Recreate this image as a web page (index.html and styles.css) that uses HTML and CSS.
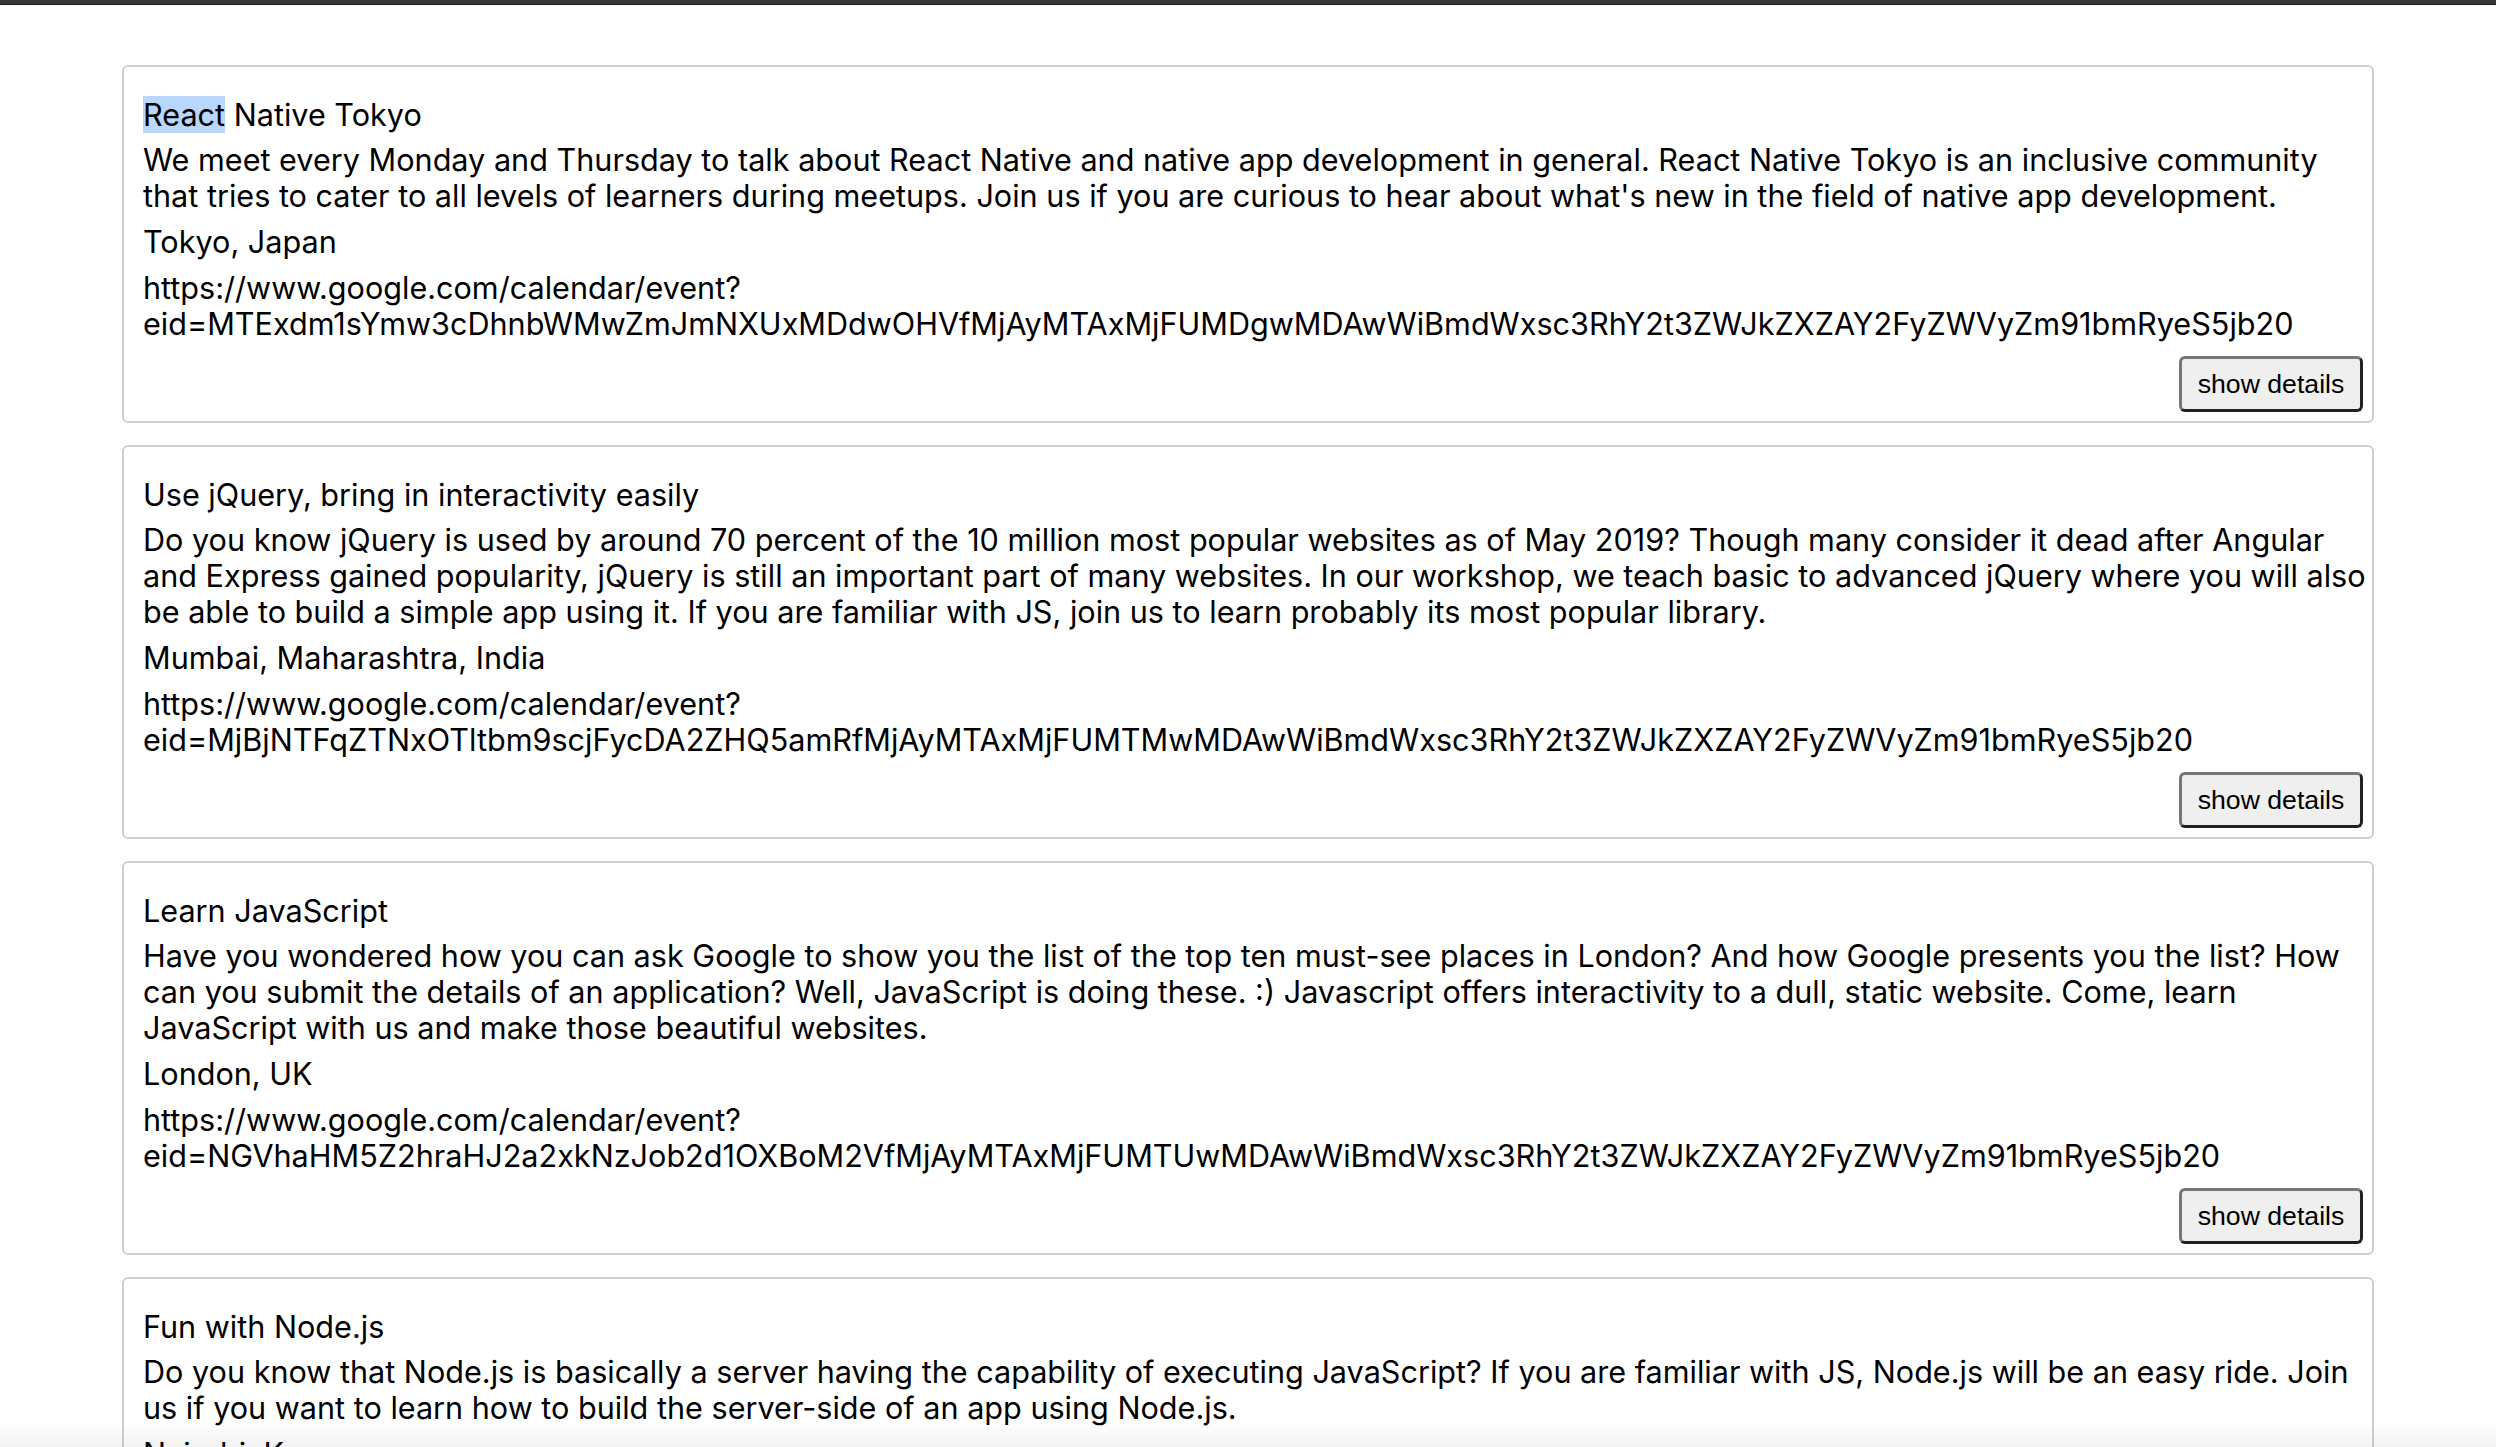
FILE: index.html
```html
<!DOCTYPE html>
<html lang="en">
<head>
<meta charset="utf-8">
<title>Events</title>
<link rel="stylesheet" href="styles.css">
</head>
<body>
<div class="topbar"></div>
<main class="event-list">
  <article class="event">
    <p class="event-name"><span class="selected">React</span> Native Tokyo</p>
    <p class="event-desc">We meet every Monday and Thursday to talk about React Native and native app development in general. React Native Tokyo is an inclusive community that tries to cater to all levels of learners during meetups. Join us if you are curious to hear about what's new in the field of native app development.</p>
    <p class="event-loc">Tokyo, Japan</p>
    <p class="event-link">https://www.google.com/calendar/event?<wbr>eid=MTExdm1sYmw3cDhnbWMwZmJmNXUxMDdwOHVfMjAyMTAxMjFUMDgwMDAwWiBmdWxsc3RhY2t3ZWJkZXZAY2FyZWVyZm91bmRyeS5jb20</p>
    <div class="event-actions"><button class="details-btn">show details</button></div>
  </article>
  <article class="event">
    <p class="event-name">Use jQuery, bring in interactivity easily</p>
    <p class="event-desc">Do you know jQuery is used by around 70 percent of the 10 million most popular websites as of May 2019? Though many consider it dead after Angular and Express gained popularity, jQuery is still an important part of many websites. In our workshop, we teach basic to advanced jQuery where you will also be able to build a simple app using it. If you are familiar with JS, join us to learn probably its most popular library.</p>
    <p class="event-loc">Mumbai, Maharashtra, India</p>
    <p class="event-link">https://www.google.com/calendar/event?<wbr>eid=MjBjNTFqZTNxOTltbm9scjFycDA2ZHQ5amRfMjAyMTAxMjFUMTMwMDAwWiBmdWxsc3RhY2t3ZWJkZXZAY2FyZWVyZm91bmRyeS5jb20</p>
    <div class="event-actions"><button class="details-btn">show details</button></div>
  </article>
  <article class="event">
    <p class="event-name">Learn JavaScript</p>
    <p class="event-desc">Have you wondered how you can ask Google to show you the list of the top ten must-see places in London? And how Google presents you the list? How can you submit the details of an application? Well, JavaScript is doing these. :) Javascript offers interactivity to a dull, static website. Come, learn JavaScript with us and make those beautiful websites.</p>
    <p class="event-loc">London, UK</p>
    <p class="event-link">https://www.google.com/calendar/event?<wbr>eid=NGVhaHM5Z2hraHJ2a2xkNzJob2d1OXBoM2VfMjAyMTAxMjFUMTUwMDAwWiBmdWxsc3RhY2t3ZWJkZXZAY2FyZWVyZm91bmRyeS5jb20</p>
    <div class="event-actions"><button class="details-btn">show details</button></div>
  </article>
  <article class="event">
    <p class="event-name">Fun with Node.js</p>
    <p class="event-desc">Do you know that Node.js is basically a server having the capability of executing JavaScript? If you are familiar with JS, Node.js will be an easy ride. Join us if you want to learn how to build the server-side of an app using Node.js.</p>
    <p class="event-loc">Nairobi, Kenya</p>
    <p class="event-link">https://www.google.com/calendar/event?<wbr>eid=MXNvcGFxMmRlOWRqdGpiaXVuOGdqdHM0aGVfMjAyMTAxMjFUMTgwMDAwWiBmdWxsc3RhY2t3ZWJkZXZAY2FyZWVyZm91bmRyeS5jb20</p>
    <div class="event-actions"><button class="details-btn">show details</button></div>
  </article>
</main>
<div class="bottom-fade"></div>
</body>
</html>
```
FILE: styles.css
```css
html, body {
  height: 100%;
  overflow: hidden;
}

body {
  margin: 0;
  background: #ffffff;
  color: #000000;
  font-family: "Inter", "Liberation Sans", sans-serif;
  font-size: 30.6px;
  line-height: 36px;
}

.topbar {
  height: 4px;
  background: #35363a;
  border-bottom: 1px solid #1c1c1e;
}

.event-list {
  display: flex;
  flex-direction: column;
  gap: 22px;
  padding: 60px 122px 0 122px;
}

.event {
  border: 2px solid #d0d0d0;
  border-radius: 6px;
  padding: 30px 6px 9px 19px;
  display: flex;
  flex-direction: column;
}

.event p {
  margin: 0 0 10px 0;
}

.event .event-name {
  margin-bottom: 9px;
}

.event .event-link {
  margin-bottom: 14px;
}

.selected {
  background: #b9d6fb;
}

.event-actions {
  display: flex;
  justify-content: flex-end;
  padding-right: 3px;
}

.details-btn {
  font-family: "Liberation Sans", Arial, sans-serif;
  font-size: 26.67px;
  line-height: 30px;
  color: #000;
  background: #efefef;
  border: 3px solid;
  border-color: #767676 #222222 #222222 #767676;
  border-radius: 6px;
  width: 184px;
  height: 56px;
  padding: 0;
}

.bottom-fade {
  position: fixed;
  left: 0;
  right: 0;
  bottom: 0;
  height: 26px;
  background: linear-gradient(to bottom, rgba(0,0,0,0), rgba(0,0,0,0.05));
  pointer-events: none;
}
```
